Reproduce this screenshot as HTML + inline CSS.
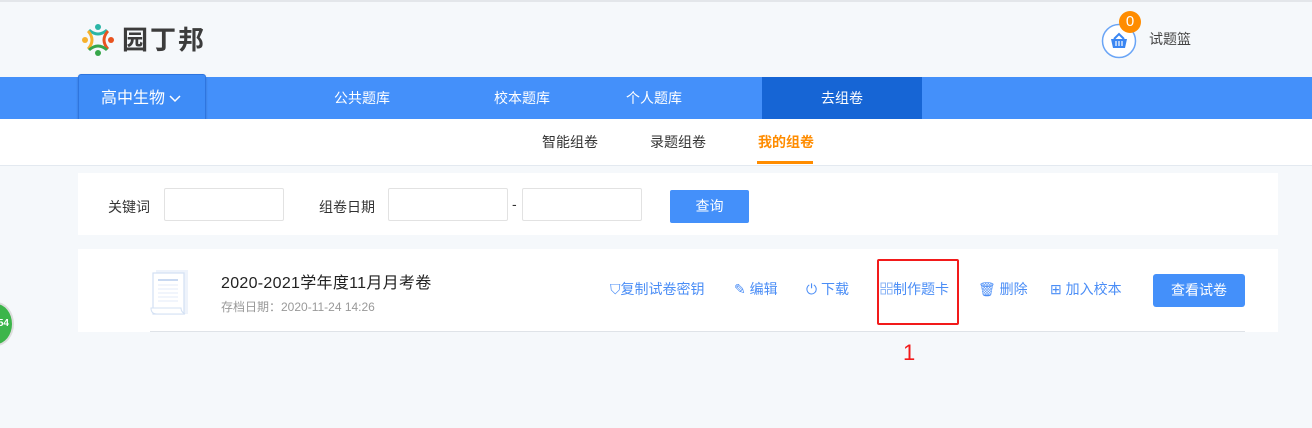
<!DOCTYPE html>
<html><head><meta charset="utf-8"><style>
*{margin:0;padding:0;box-sizing:border-box}
body{width:1312px;height:428px;background:#f5f8fb;font-family:"Liberation Sans","Noto Sans CJK SC",sans-serif;position:relative;overflow:hidden;font-size:14px;color:#333}
.a{position:absolute}
.nav{left:0;top:77px;width:1312px;height:42px;background:#4490fa}
.nav span{position:absolute;top:0;height:42px;line-height:42px;color:#fff;font-size:14px;text-align:center;width:160px}
.sub{left:0;top:119px;width:1312px;height:47px;background:#fff;border-bottom:1px solid #e3e9f0}
.sub span{position:absolute;top:0;line-height:46px;font-size:14px;color:#333}
.inp{position:absolute;top:188px;height:33px;border:1px solid #e2e2e2;background:#fff;border-radius:2px}
.act{position:absolute;top:280px;font-size:14px;color:#4a8df6;line-height:18px}
</style></head><body>
<div class="a" style="left:0;top:0;width:1312px;height:2px;background:#e3e6ea"></div>
<svg class="a" style="left:80px;top:22px" width="36" height="36" viewBox="0 0 36 36">
<circle cx="18" cy="5" r="3" fill="#2bb5a6"/><path d="M8 9 Q18 18 28 9 L26 7 Q18 14 10 7Z" fill="#2bb5a6"/>
<circle cx="5" cy="18" r="3" fill="#f6b02b"/><path d="M9 8 Q18 18 9 28 L7 26 Q14 18 7 10Z" fill="#f6b02b"/>
<circle cx="31" cy="18" r="3" fill="#e9531f"/><path d="M27 8 Q18 18 27 28 L29 26 Q22 18 29 10Z" fill="#e9531f"/>
<circle cx="18" cy="31" r="3" fill="#36a64a"/><path d="M8 27 Q18 18 28 27 L26 29 Q18 22 10 29Z" fill="#36a64a"/>
</svg>
<div class="a" style="left:122px;top:22px;font-size:26px;color:#3c3c3c;letter-spacing:2px;line-height:36px;font-weight:bold">园丁邦</div>
<svg class="a" style="left:1101px;top:23px" width="36" height="36"><circle cx="18" cy="18" r="16.5" fill="#fff" stroke="#6aa5f6" stroke-width="1.5"/><path d="M10 16h16l-2 9h-12z" fill="#3a86f2"/><path d="M13 16l5-5 5 5" stroke="#3a86f2" stroke-width="2" fill="none"/><path d="M15 18v5M18 18v5M21 18v5" stroke="#fff" stroke-width="1.2"/></svg>
<div class="a" style="left:1119px;top:11px;width:22px;height:22px;border-radius:50%;background:#ff8c00;color:#fff;text-align:center;line-height:22px;font-size:15px">0</div>
<div class="a" style="left:1149px;top:29px;font-size:14px;color:#444">试题篮</div>
<div class="a nav"><span style="left:282px">公共题库</span><span style="left:442px">校本题库</span><span style="left:574px">个人题库</span><span style="left:762px;background:#1665d5">去组卷</span></div>
<div class="a" style="left:78px;top:74px;width:128px;height:49px;background:#3e8cf7;border:1px solid #2e75df;border-radius:3px;color:#fff;font-size:16px;line-height:47px;padding-left:22px;box-shadow:0 1px 2px rgba(0,0,0,.2)">高中生物 <svg width="12" height="8" style="vertical-align:middle"><path d="M1 1l5 5 5-5" stroke="#fff" stroke-width="1.5" fill="none"/></svg></div>
<div class="a sub"><span style="left:542px">智能组卷</span><span style="left:650px">录题组卷</span><span style="left:758px;color:#ff8c00;font-weight:bold">我的组卷</span><div class="a" style="left:757px;top:42px;width:56px;height:3px;background:#ff8c00"></div></div>
<div class="a" style="left:78px;top:173px;width:1200px;height:62px;background:#fff"></div>
<div class="a" style="left:108px;top:197px">关键词</div>
<div class="inp" style="left:164px;width:120px"></div>
<div class="a" style="left:319px;top:197px">组卷日期</div>
<div class="inp" style="left:388px;width:120px"></div>
<div class="a" style="left:512px;top:196px">-</div>
<div class="inp" style="left:522px;width:120px"></div>
<div class="a" style="left:670px;top:190px;width:79px;height:33px;background:#4490fa;border-radius:2px;color:#fff;text-align:center;line-height:33px">查询</div>
<div class="a" style="left:78px;top:249px;width:1200px;height:83px;background:#fff"></div>
<div class="a" style="left:150px;top:331px;width:1095px;height:1px;background:#dfe3e8"></div>
<svg class="a" style="left:150px;top:268px" width="42" height="50"><rect x="6" y="2" width="32" height="44" fill="#eef3fb"/><rect x="3" y="5" width="31" height="41" fill="#fff" stroke="#d3e0f3" stroke-width="1.2"/><path d="M8 12h20" stroke="#c9d9f1" stroke-width="2"/><path d="M8 17h20M8 21h20M8 25h20M8 29h20M8 33h20" stroke="#e3ebf8"/><path d="M1 40q0 6 6 6h28q-4-2-4-6z" fill="#fff" stroke="#d3e0f3"/></svg>
<div class="a" style="left:221px;top:269px;font-size:16px;color:#222;letter-spacing:0.3px">2020-2021学年度11月月考卷</div>
<div class="a" style="left:221px;top:298px;font-size:12px;color:#999">存档日期：2020-11-24 14:26</div>
<div class="act" style="left:610px">⛉复制试卷密钥</div>
<div class="act" style="left:734px">✎ 编辑</div>
<div class="act" style="left:806px">⏻ 下载</div>
<div class="act" style="left:880px"><svg width="13" height="13" style="vertical-align:-1px"><rect x="1" y="1" width="4.5" height="4.5" fill="none" stroke="#8db6f6"/><rect x="7.5" y="1" width="4.5" height="4.5" fill="none" stroke="#8db6f6"/><rect x="1" y="7.5" width="4.5" height="4.5" fill="none" stroke="#8db6f6"/><rect x="7.5" y="7.5" width="4.5" height="4.5" fill="none" stroke="#8db6f6"/></svg>制作题卡</div>
<div class="act" style="left:978px">🗑 删除</div>
<div class="act" style="left:1050px">⊞ 加入校本</div>
<div class="a" style="left:1153px;top:274px;width:92px;height:33px;background:#4490fa;border-radius:3px;color:#fff;text-align:center;line-height:33px">查看试卷</div>
<div class="a" style="left:877px;top:259px;width:82px;height:66px;border:2px solid #f21a1a;border-radius:2px"></div>
<div class="a" style="left:903px;top:340px;font-size:22px;color:#f21a1a">1</div>
<div class="a" style="left:-22px;top:302px;width:36px;height:44px;border-radius:50%;background:#3cb54a;border:2px solid #ddd;color:#fff;font-size:10px;font-weight:bold;line-height:40px;text-align:right;padding-right:3px">54</div>
</body></html>
